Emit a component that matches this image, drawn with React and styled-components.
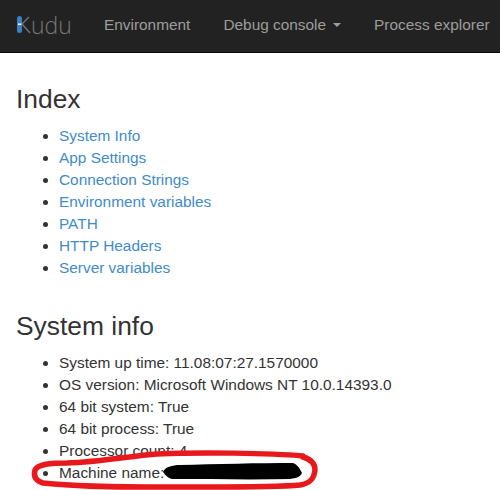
import React from 'react';
import styled, { createGlobalStyle } from 'styled-components';

const GlobalStyle = createGlobalStyle`
    html, body {
        margin: 0;
        padding: 0;
        background: #fff;
        overflow: hidden;
    }
    body {
        font-family: "Liberation Sans", Arial, sans-serif;
        font-size: 15.4px;
        line-height: 22px;
        color: #333;
    }
`;

const Page = styled.div`
    position: relative;
    width: 500px;
    height: 490px;
    overflow: hidden;
`;

const Navbar = styled.nav`
    display: flex;
    align-items: center;
    height: 50px;
    padding: 0 0 2px 16px;
    background: #222;
    border-bottom: 1px solid #080808;
    white-space: nowrap;
`;

const Brand = styled.div`
    display: flex;
    align-items: center;
    width: 56px;
    font-family: "Open Sans", sans-serif;
    font-size: 23px;
    font-weight: 300;
    color: #777;
`;

const NavLinks = styled.div`
    display: flex;
    gap: 33px;
    margin-left: 32px;
`;

const NavLink = styled.a`
    display: flex;
    align-items: center;
    color: #9d9d9d;
    font-size: 15.4px;
`;

const Caret = styled.span`
    display: inline-block;
    margin-left: 7px;
    border-top: 4.4px solid #9d9d9d;
    border-left: 4.4px solid transparent;
    border-right: 4.4px solid transparent;
`;

const Content = styled.main`
    padding: 0 16px;
`;

const Heading = styled.h2`
    margin: ${p => p.$top}px 0 10px;
    font-size: 26.4px;
    font-weight: 500;
    line-height: 31px;
    color: #333;
`;

const List = styled.ul`
    margin: 0 0 10px;
    padding-left: 43px;
`;

const Link = styled.a`
    color: #428bca;
    text-decoration: none;
`;

const Scribble = styled.svg`
    position: absolute;
    left: 0;
    top: 0;
`;

const indexLinks = ['System Info', 'App Settings', 'Connection Strings', 'Environment variables', 'PATH', 'HTTP Headers', 'Server variables'];
const infoRows = ['System up time: 11.08:07:27.1570000', 'OS version: Microsoft Windows NT 10.0.14393.0', '64 bit system: True', '64 bit process: True', 'Processor count: 4', 'Machine name:'];

export default function App() {
    return (
        <Page>
            <GlobalStyle />
            <Navbar>
                <Brand>
                    <svg width="15" height="20" viewBox="0 0 15 20" style={{ flex: 'none' }}>
                        <rect x="1" y="1" width="5" height="17" rx="2.5" fill="#3d7fc4" />
                        <rect x="2" y="8.5" width="3.5" height="1.5" fill="#fff" />
                        <path d="M6 9 L13 2 M6 9 L14 18" stroke="#777" strokeWidth="1.3" fill="none" />
                    </svg>
                    <span>udu</span>
                </Brand>
                <NavLinks>
                    <NavLink>Environment</NavLink>
                    <NavLink>Debug console<Caret /></NavLink>
                    <NavLink>Process explorer</NavLink>
                </NavLinks>
            </Navbar>
            <Content>
                <Heading $top={31}>Index</Heading>
                <List>
                    {indexLinks.map(l => <li key={l}><Link>{l}</Link></li>)}
                </List>
                <Heading $top={32}>System info</Heading>
                <List>
                    {infoRows.map(l => <li key={l}>{l}</li>)}
                </List>
            </Content>
            <Scribble width="500" height="490" viewBox="0 0 500 490">
                <path d="M163 472 C165 467 172 465 180 465 C215 464 260 463 293 463 C298 465 300 469 302 473 C300 477 297 478 290 479 C250 480 210 479 172 479 C168 478 165 475 163 472 Z" fill="#000" />
                <path d="M303 456 C270 453 200 452 157 454 C130 456 100 462 67 463 C50 463 38 464 35 470 C33 477 36 481 43 483 C90 488 150 487 200 487 C240 487 280 487 300 485 C311 483 314 478 315 470 C315 463 310 459 303 457" fill="none" stroke="#e8191c" strokeWidth="5.5" strokeLinecap="round" />
            </Scribble>
        </Page>
    );
}
